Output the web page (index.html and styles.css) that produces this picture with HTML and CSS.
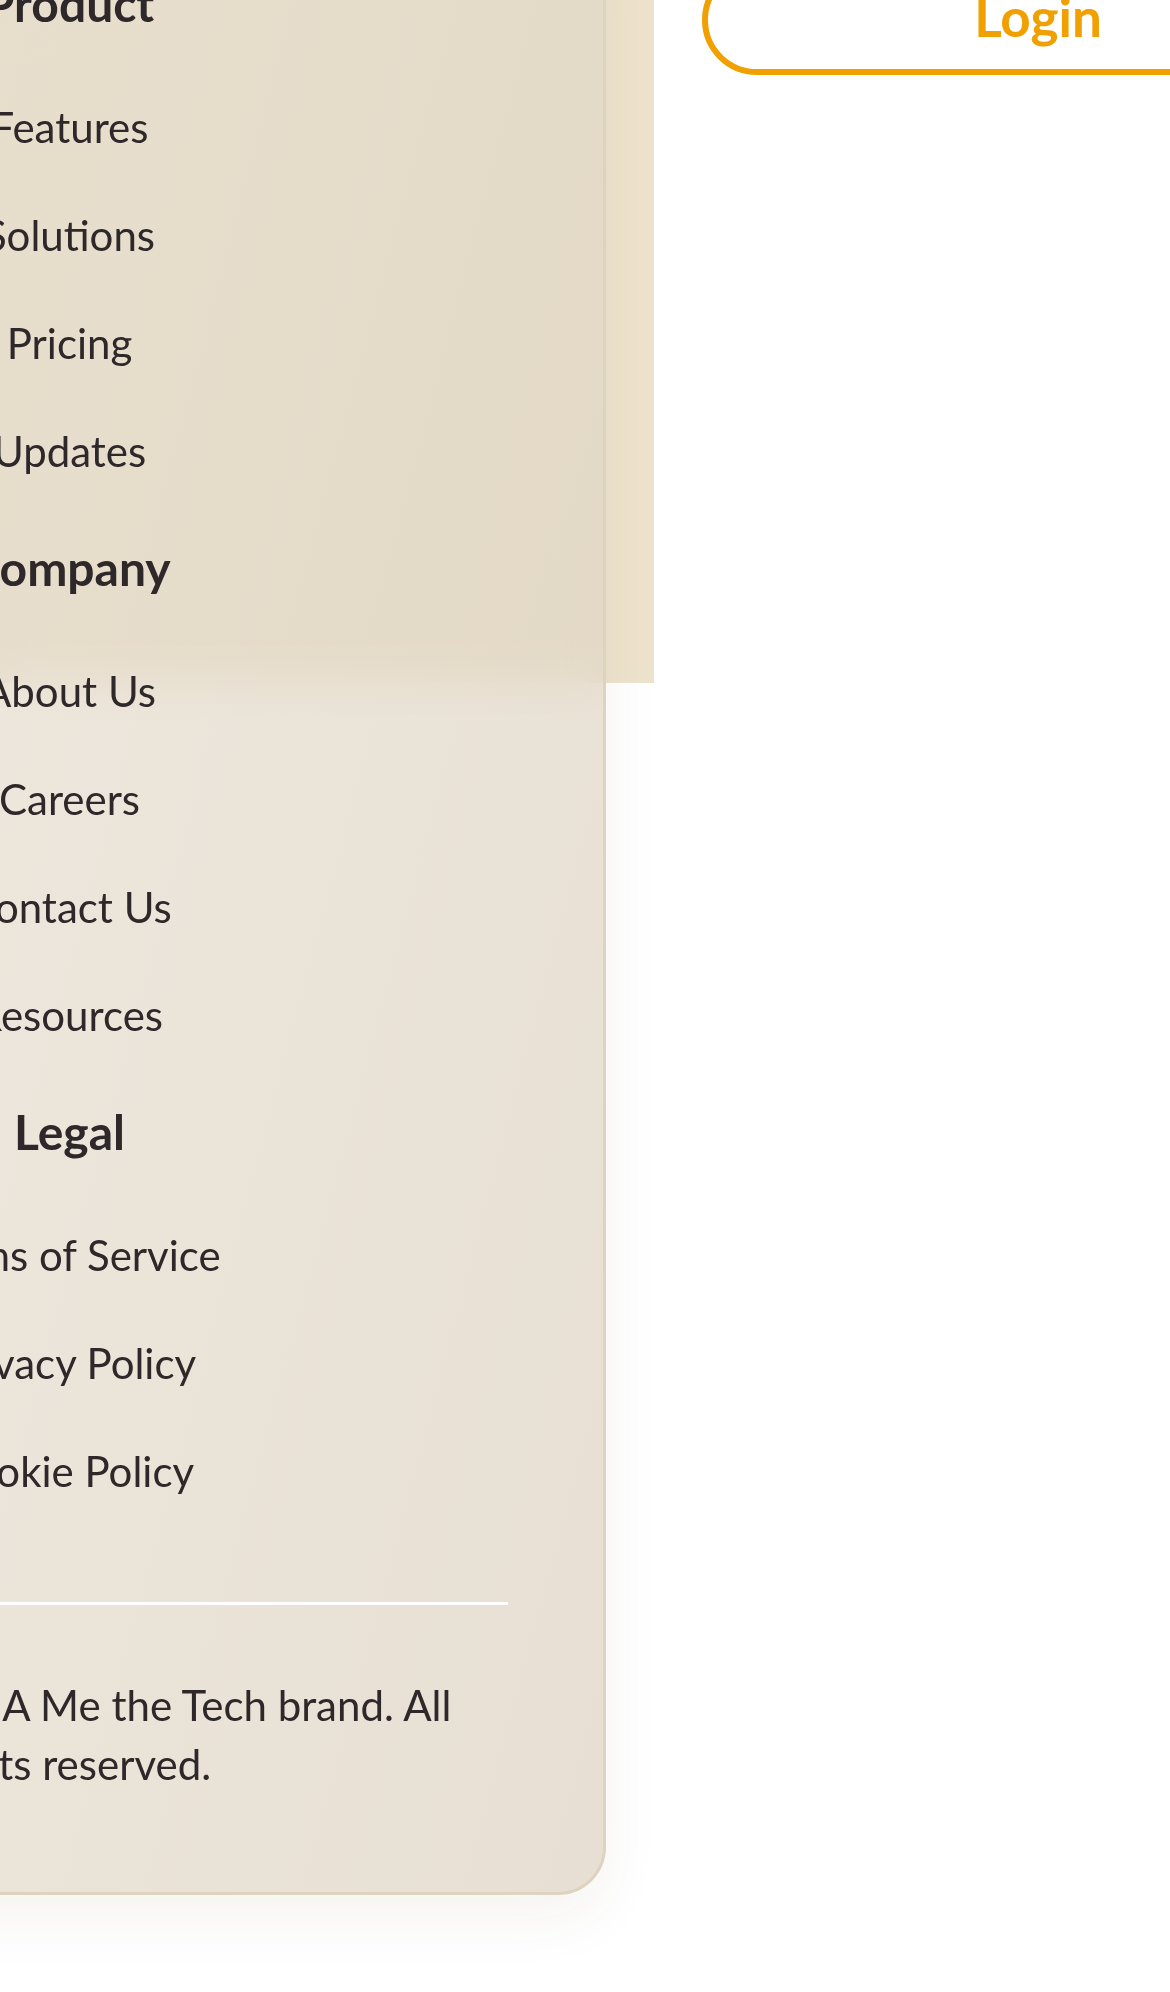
FILE: index.html
```html
<!DOCTYPE html>
<html lang="en">
<head>
<meta charset="utf-8">
<title>Menu</title>
<link rel="stylesheet" href="styles.css">
</head>
<body>
<header class="topbar">
  <div class="topbar-fill"></div>
  <a class="login-btn" href="#">Login</a>
</header>

<nav class="drawer">
  <section class="drawer-section">
    <h3 class="drawer-title">Product</h3>
    <ul class="drawer-links">
      <li><a href="#">Features</a></li>
      <li><a href="#">Solutions</a></li>
      <li><a href="#">Pricing</a></li>
      <li><a href="#">Updates</a></li>
    </ul>
  </section>
  <section class="drawer-section">
    <h3 class="drawer-title">Company</h3>
    <ul class="drawer-links">
      <li><a href="#">About Us</a></li>
      <li><a href="#">Careers</a></li>
      <li><a href="#">Contact Us</a></li>
      <li><a href="#">Resources</a></li>
    </ul>
  </section>
  <section class="drawer-section">
    <h3 class="drawer-title">Legal</h3>
    <ul class="drawer-links">
      <li><a href="#">Terms of Service</a></li>
      <li><a href="#">Privacy Policy</a></li>
      <li><a href="#">Cookie Policy</a></li>
    </ul>
  </section>
  <hr class="drawer-divider">
  <p class="drawer-copy">© 2024 MyTech, A Me the Tech brand. All rights reserved.</p>
</nav>
</body>
</html>
```

FILE: styles.css
```css
html, body {
  margin: 0;
  padding: 0;
}

body {
  width: 1170px;
  height: 1992px;
  overflow: hidden;
  position: relative;
  background: #ffffff;
  font-family: "Lato", "Open Sans", "Liberation Sans", sans-serif;
  color: #2e282a;
}

.topbar {
  display: flex;
  align-items: flex-start;
  margin-top: -35px;
}

.topbar-fill {
  flex: none;
  width: 654px;
  height: 718px;
  background: #ede3cc;
}

.login-btn {
  flex: none;
  box-sizing: border-box;
  width: 672px;
  height: 110px;
  margin-left: 48px;
  border: 6px solid #f0a000;
  border-radius: 55px;
  display: flex;
  align-items: center;
  justify-content: center;
  padding-bottom: 8px;
  color: #f0a000;
  font-weight: 700;
  font-size: 53px;
  line-height: 53px;
  text-decoration: none;
  background: #ffffff;
}

.drawer {
  position: absolute;
  left: -467px;
  top: -101px;
  box-sizing: border-box;
  width: 1073px;
  padding: 72px 95px 98px;
  border: 3px solid #ddd3be;
  border-radius: 48px;
  text-align: center;
  background: linear-gradient(105deg,
    rgba(229, 220, 206, 0.68) 0%,
    rgba(228, 219, 204, 0.68) 40%,
    rgba(220, 208, 190, 0.68) 100%);
  backdrop-filter: blur(24px);
  -webkit-backdrop-filter: blur(24px);
  box-shadow: 0 24px 60px rgba(80, 60, 20, 0.06);
}

.drawer-section + .drawer-section {
  margin-top: 33px;
}

.drawer-title {
  margin: 0 0 39px;
  font-size: 48px;
  line-height: 60px;
  font-weight: 700;
  color: #2e282a;
}

.drawer-links {
  list-style: none;
  margin: 0;
  padding: 0;
}

.drawer-links a {
  display: block;
  padding: 24px 0;
  font-size: 42px;
  line-height: 60px;
  font-weight: 400;
  color: #2e282a;
  text-decoration: none;
}

.drawer-divider {
  margin: 77px 0 71px;
  height: 3px;
  border: 0;
  background: #ffffff;
}

.drawer-copy {
  max-width: 850px;
  margin: 0 auto;
  font-size: 42px;
  line-height: 58.8px;
  color: #2e282a;
}
```
